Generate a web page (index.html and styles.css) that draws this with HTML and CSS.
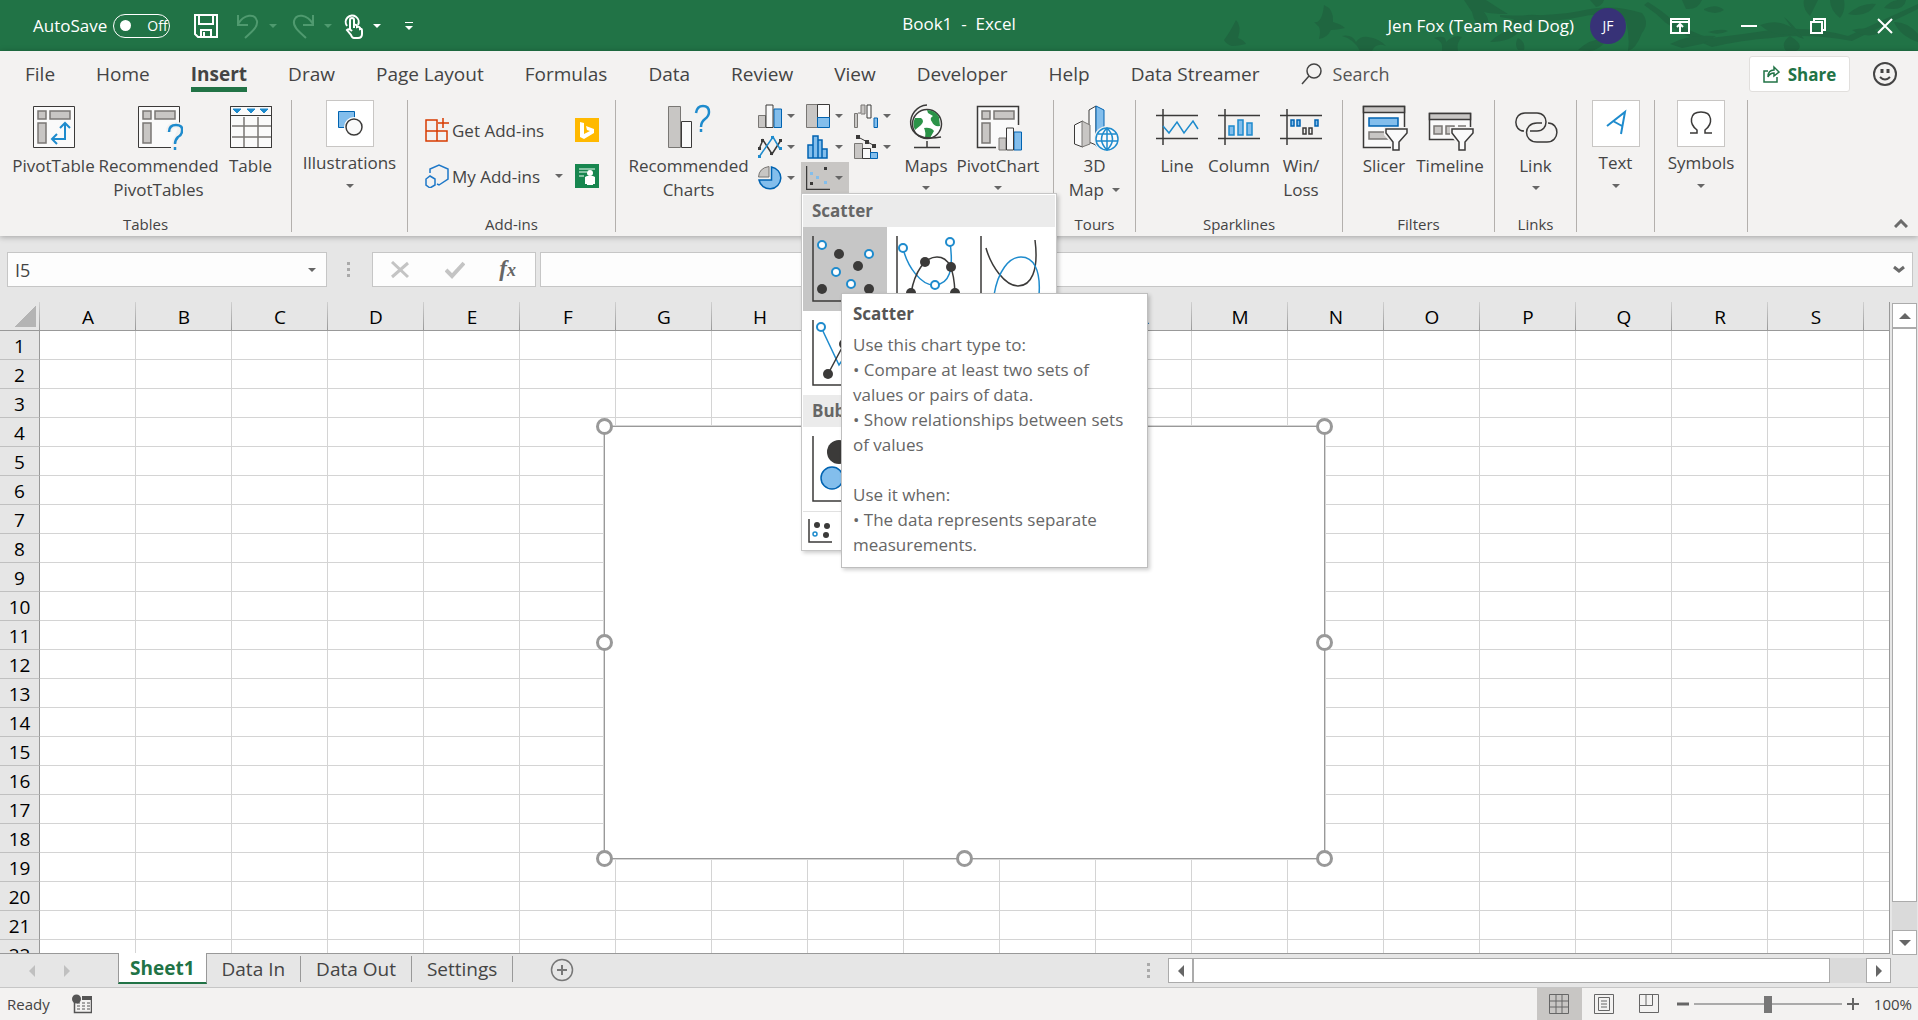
FILE: index.html
```html
<!DOCTYPE html>
<html lang="en">
<head>
  <meta charset="UTF-8" />
  <meta name="viewport" content="width=device-width, initial-scale=1.0" />
  <title>Book1 - Excel</title>
  <link rel="stylesheet" href="styles.css">
</head>
<body>
  <header class="titlebar">
    <svg class="leaves" width="718" height="51" viewBox="0 0 718 51" fill="#1f6640">
      <path d="M24 40q6-8 12-20q6 6 2 18q6 2 8 6q-8 2-14 2q-6-2-8-6z" />
      <path d="M114 22q8 2 10-17q10 4 9 17q8 2 12 6q-8 2-14 2q-4 8-12 9q2-8 0-12z" />
      <path d="M142 36q10-2 14 6q4-6 12-5q12 2 18 9q-10-4-14 5h-12q-6-12-18-15z" />
      <path d="M234 38q12-4 12 4q8-8 16-5q-6 6-4 14h-16q2-10-8-13z" />
      <path d="M264 0h22q12 8 22 14q-16 0-24-2q8 10 2 20q-12-8-14-20zM290 42q14-14 30-12q-8 12-30 12zM318 38q8 4 6 12h-6q-4-6 0-12zM310 22q14-10 32-6q-12 10-32 6z" />
      <path d="M300 15q50 2 80-4q32-8 62 2q8 10 0 20q-6 16-14 18q2-14-2-30q-22-10-46-4q-40 8-80 0z" />
      <path d="M378 50q12-12 28-11q-4 10-16 12zM390 0h14q-2 6-8 7z" />
      <path d="M448 2q16 10 24 18q18 12 38 18q36-4 60-8q40-4 78 6l70-32v5l-66 32q-44-8-80-3q-30 2-60 9q-26-10-46-24q-10-10-22-18z" />
      <path d="M482 0h20q-4 10-16 9zM504 9q12-6 20 1q-8 6-20 0zM470 44q18-10 46-8l-14 8l-20 4zM508 32q14-4 20-1q-10 5-20 1z" />
      <path d="M560 25q22-8 38 8q-22 6-38-8zM584 17q8 6 20 22l-6-2zM590 36q16 10 6 15h-10q-6-8 4-15zM604 0h14l-8 16q-8-8-6-16zM630 0h14q2 10-4 18q-10-8-10-18zM648 14q14-12 28-10q-8 14-28 10zM652 30q18-4 28 3q-14 6-28-3zM684 8q8-10 22-8q-2 12-22 8zM694 22q14 0 24 12v8q-18-6-24-20z" />
    </svg>
    <div class="quick-access">
      <span id="autosave-label">AutoSave</span>
      <button class="toggle" role="switch" aria-checked="false" aria-labelledby="autosave-label"><i></i>Off</button>
      <button class="qa-btn save" aria-label="Save">
        <svg width="24" height="24" viewBox="0 0 24 24" fill="none" stroke="#fff" stroke-width="2"><path d="M1 1h22v22H4l-3-3zM5 1v9h14V1M7 23v-7h10v7M10 18v5" /></svg>
      </button>
      <button class="qa-btn faded" aria-label="Undo">
        <svg width="24" height="26" viewBox="0 0 24 26" fill="none" stroke="#4f9a6f" stroke-width="2"><path d="M2 2v10h10M2 11C8 1 19 0 21 8c1 5-3 9-12 17" /></svg>
      </button>
      <i class="caret faded"></i>
      <button class="qa-btn redo" aria-label="Redo">
        <svg width="24" height="26" viewBox="0 0 24 26" fill="none" stroke="#4f9a6f" stroke-width="2"><path d="M22 2v10H12M22 11C16 1 5 0 3 8c-1 5 3 9 12 17" /></svg>
      </button>
      <i class="caret faded"></i>
      <button class="qa-btn touch" aria-label="Touch mode">
        <svg width="20" height="26" viewBox="0 0 20 26" fill="none" stroke="#fff" stroke-width="2"><path d="M3 13a6.500 6.500 0 1 1 11-1M6 17V7q0-2 2-2t2 2v8V12q3-1 3 2q3-1 3 2q2-1 2 2v3q0 4-4 4h-4q-2 0-3-3l-4-5q2-2 5 1" /></svg>
      </button>
      <i class="caret"></i>
      <button class="qa-btn customize" aria-label="Customize Quick Access Toolbar"><b></b><i class="caret"></i></button>
    </div>
    <h1>Book1&nbsp; -&nbsp; Excel</h1>
    <div class="account">
      <span>Jen Fox (Team Red Dog)</span>
      <button class="avatar">JF</button>
      <button class="win-btn" aria-label="Ribbon display options">
        <svg width="20" height="16" viewBox="0 0 20 16" fill="none" stroke="#fff" stroke-width="2"><path d="M1 1h18v14H1zM1 4h18M10 14V7M7 9l3-3l3 3" /></svg>
      </button>
      <button class="win-btn" aria-label="Minimize">
        <svg width="16" height="16" viewBox="0 0 16 16" stroke="#fff" stroke-width="2"><path d="M0 8h16" /></svg>
      </button>
      <button class="win-btn" aria-label="Restore">
        <svg width="16" height="16" viewBox="0 0 16 16" fill="none" stroke="#fff" stroke-width="2"><path d="M1 4h11v11H1zM4 4V1h11v11h-3" /></svg>
      </button>
      <button class="win-btn" aria-label="Close">
        <svg width="16" height="16" viewBox="0 0 16 16" stroke="#fff" stroke-width="2"><path d="M1 1l14 14M15 1L1 15" /></svg>
      </button>
    </div>
  </header>

  <div class="ribbon">
    <nav class="tabs">
      <button>File</button>
      <button>Home</button>
      <button class="active">Insert</button>
      <button>Draw</button>
      <button>Page Layout</button>
      <button>Formulas</button>
      <button>Data</button>
      <button>Review</button>
      <button>View</button>
      <button>Developer</button>
      <button>Help</button>
      <button>Data Streamer</button>
      <label class="search">
        <svg width="22" height="24" viewBox="0 0 22 24" fill="none" stroke="#444" stroke-width="1.500"><circle cx="13" cy="9" r="7" /><path d="M8 14l-7 8" /></svg>
        <input type="text" placeholder="Search" aria-label="Search">
      </label>
      <button class="share">
        <svg width="17" height="18" viewBox="0 0 17 18" fill="none" stroke="#217346" stroke-width="1.500"><path d="M5 6H1v11h13v-5M5 12q0-7 6-7V2l5 5l-5 4V8q-4 0-6 4z" /></svg>
        Share
      </button>
      <button class="smile" aria-label="Feedback">
        <svg width="24" height="24" viewBox="0 0 24 24" fill="none" stroke="#444" stroke-width="2"><circle cx="12" cy="12" r="11" /><path d="M9 7v4M15 7v4" stroke-width="3" /><path d="M7 15q5 5 10 0" /></svg>
      </button>
    </nav>

    <div class="groups">
      <section class="group tables">
        <div class="tools">
          <button class="big w92">
            <svg width="48" height="48" viewBox="0 0 48 48" fill="#fafafa" stroke="#3b3a39"><path d="M3.500 3.500h41v41h-41z" /><path d="M8 8h8v8H8zM20 8h20v8H20zM8 20h8v20H8z" fill="#c8c6c4" stroke="#797774" stroke-width="1.500" /><path d="M35 21v15H22M30 25l5-5l5 5M27 31l-5 5l5 5" fill="none" stroke="#1e8bcd" stroke-width="2" /></svg>
            <span>PivotTable</span>
          </button>
          <button class="big w118">
            <svg width="48" height="48" viewBox="0 0 48 48" fill="none" stroke="#3b3a39"><path d="M44.500 20V3.500h-41v41H36" fill="#fafafa" /><path d="M8 8h8v8H8zM20 8h20v8H20zM8 20h8v20H8z" fill="#c8c6c4" stroke="#797774" stroke-width="1.500" /><path d="M34 29q0-7 7-7t6 6q0 4-4 6q-3 3-3 7M40 44v3" stroke="#f3f2f1" stroke-width="6" /><path d="M34 29q0-7 7-7t6 6q0 4-4 6q-3 3-3 7M40 44v3" stroke="#1e8bcd" stroke-width="2.500" /></svg>
            <span>Recommended<br>PivotTables</span>
          </button>
          <button class="big w66">
            <svg width="48" height="48" viewBox="0 0 48 48" fill="#fafafa" stroke="#3b3a39"><path d="M3.500 3.500h41v41h-41z" /><path d="M5 23h39M5 34h39M17 14v30M31 14v30" stroke="#797774" stroke-width="1.500" /><path d="M3.500 3.500h41v41h-41zM4 12.500h40" fill="none" /><path d="M6 6h8l-4 4zM20 6h8l-4 4zM33 6h8l-4 4z" fill="#1e8bcd" stroke="#1e8bcd" /></svg>
            <span>Table</span>
          </button>
        </div>
        <h2>Tables</h2>
      </section>

      <section class="group illustrations">
        <button class="framed">
          <svg width="48" height="47" viewBox="0 0 48 47"><path d="M12.500 11.500h16v16h-16z" fill="#83beec" stroke="#0063b1" /><circle cx="28" cy="27" r="10" fill="#fff" /><circle cx="28" cy="27" r="8" fill="#fafafa" stroke="#3b3a39" stroke-width="1.500" /></svg>
          <span>Illustrations</span>
          <i class="caret"></i>
        </button>
      </section>

      <section class="group addins">
        <div class="addin-grid">
          <button class="small">
            <svg width="24" height="24" viewBox="0 0 24 24" fill="none" stroke="#d83b01" stroke-width="1.500"><path d="M1 2h11v11H1zM1 13h11v10H1zM12 13h10v10H12zM18 0v10M13 5h11" /></svg>
            Get Add-ins
          </button>
          <button class="small" aria-label="Bing Maps">
            <svg width="24" height="24" viewBox="0 0 24 24"><path d="M0 0h24v24H0z" fill="#ffb900" /><path d="M5 4l4 1v11l6-3l-3-1l-1-4l8 3v4l-10 6l-4-2z" fill="#fff" /></svg>
          </button>
          <button class="small">
            <svg width="24" height="24" viewBox="0 0 24 24" fill="none" stroke="#1e78c8" stroke-width="1.500"><path d="M5 9V5l9-4l9 4v10l-9 6l-2-1M5 12l5 3v6l-5 3l-4-3v-6z" /></svg>
            My Add-ins
            <i class="caret"></i>
          </button>
          <button class="small" aria-label="People Graph">
            <svg width="24" height="24" viewBox="0 0 24 24"><path d="M0 0h24v24H0z" fill="#17864f" /><path d="M4 5h16M4 8h8M4 12h5" stroke="#a9d8c0" stroke-width="1.500" /><circle cx="15" cy="9" r="3" fill="#fff" /><path d="M10 20v-7l2-1h6l2 1v7h-2v-4v5h-6v-5v4z" fill="#fff" /></svg>
          </button>
        </div>
        <h2>Add-ins</h2>
      </section>

      <section class="group charts">
        <div class="tools">
          <button class="big w129">
            <svg width="48" height="48" viewBox="0 0 48 48" fill="none" stroke="#3b3a39"><path d="M3.500 3.500h12v41h-12z" fill="#c8c6c4" stroke="#797774" /><path d="M16.500 18.500h10v26h-10z" fill="#fafafa" /><path d="M31 10q1-7 7-7t6 6q0 4-4 7q-4 3-4 8M36 26v3" stroke="#1e8bcd" stroke-width="2.500" /></svg>
            <span>Recommended<br>Charts</span>
          </button>
          <div class="chart-grid">
            <button aria-label="Column chart"><svg width="24" height="24" viewBox="0 0 24 24"><path d="M.5 11.500h7v12h-7z" fill="#c8c6c4" stroke="#797774" /><path d="M16 5h7.500v18.500H16z" fill="#83beec" stroke="#0063b1" /><path d="M8 1h7v22.500H8z" fill="#fafafa" stroke="#3b3a39" /></svg><i class="caret"></i></button>
            <button aria-label="Hierarchy chart"><svg width="24" height="24" viewBox="0 0 24 24"><path d="M.5.5h11v23H.5z" fill="#c8c6c4" stroke="#797774" /><path d="M11.500.5h12v13h-12z" fill="#fafafa" stroke="#3b3a39" /><path d="M11.500 13.500h12v10h-12z" fill="#83beec" stroke="#0063b1" /></svg><i class="caret"></i></button>
            <button aria-label="Waterfall chart"><svg width="24" height="24" viewBox="0 0 24 24"><path d="M.5 9.500h3v14h-3zM4 9h3V1h4v9H7" fill="#c8c6c4" stroke="#797774" /><path d="M13 1h4v13h-4z" fill="#fafafa" stroke="#3b3a39" /><path d="M20 14h3.500v9.500H20z" fill="#83beec" stroke="#0063b1" /></svg><i class="caret"></i></button>
            <button aria-label="Line chart"><svg width="24" height="24" viewBox="0 0 24 24" fill="none" stroke-width="1.500"><path d="M1 14L5 5l9 14l9-14" stroke="#3b3a39" /><path d="M1 22L15 2l7 12" stroke="#1e8bcd" /><path d="M0 12h3v3H0zM3 4h3v3H3zM12 17h3v3h-3zM21 4h3v3h-3z" fill="#3b3a39" /><path d="M0 20h3v3H0zM13 1h3v3h-3zM21 12h3v3h-3z" fill="#1e8bcd" /></svg><i class="caret"></i></button>
            <button aria-label="Statistic chart"><svg width="24" height="24" viewBox="0 0 24 24" fill="#83beec" stroke="#0063b1" stroke-width="1.500"><path d="M2 10h5v13H2zM7 1h5v22H7zM12 5h4v18h-4zM16 14h5v9h-5z" /></svg><i class="caret"></i></button>
            <button aria-label="Combo chart"><svg width="24" height="24" viewBox="0 0 24 24"><path d="M.5 8.500h8v15h-8z" fill="#c8c6c4" stroke="#797774" /><path d="M8.500 13.500h8v10h-8z" fill="#fafafa" stroke="#3b3a39" /><path d="M16.500 17.500h7v6h-7z" fill="#83beec" stroke="#0063b1" /><path d="M4 2l17 9" stroke="#3b3a39" /><path d="M2 0h4v4H2zM11 5h4v4h-4zM18 9h4v4h-4z" fill="#3b3a39" /></svg><i class="caret"></i></button>
            <button aria-label="Pie chart"><svg width="24" height="24" viewBox="0 0 24 24"><path d="M13.500 1a11 11 0 1 1-12.500 13h12.500z" fill="#83beec" stroke="#0063b1" stroke-width="1.500" /><path d="M11 11H.5Q1 2 11 .5z" fill="#c8c6c4" stroke="#797774" /></svg><i class="caret"></i></button>
            <div class="scatter-wrap">
              <button class="pressed" aria-label="Scatter chart" aria-expanded="true"><svg width="24" height="24" viewBox="0 0 24 24"><path d="M.5 0v23.500H24" fill="none" stroke="#3b3a39" stroke-width="1.500" /><path d="M18 1h3v3h-3zM4 16h3v3H4z" fill="#3b3a39" /><path d="M4 6h3v3H4zM10 10h3v3h-3zM18 15h3v3h-3z" fill="#83beec" /></svg><i class="caret"></i></button>
              <div class="menu">
                <h3>Scatter</h3>
                <div class="tiles">
                  <button class="hot" aria-label="Scatter">
                    <svg width="84" height="84" viewBox="0 0 84 84" fill="none" stroke-width="2"><path d="M10 9v65h64" stroke="#3b3a39" stroke-width="1.500" /><g fill="#fff" stroke="#1e8bcd"><circle cx="19" cy="18" r="4" /><circle cx="66" cy="27" r="4" /><circle cx="33" cy="45" r="4" /><circle cx="48" cy="57" r="4" /></g><g fill="#3b3a39"><circle cx="36" cy="27" r="5" /><circle cx="55" cy="39" r="5" /><circle cx="19" cy="62" r="5" /><circle cx="66" cy="62" r="5" /></g></svg>
                  </button>
                  <button aria-label="Scatter with smooth lines and markers">
                    <svg width="84" height="84" viewBox="0 0 84 84" fill="none" stroke-width="1.500"><path d="M10 9v65h64" stroke="#3b3a39" /><path d="M16 21C20 39 34 59 48 58S67 44 63 15" stroke="#1e8bcd" /><path d="M24 66C28 44 38 30 50 30S67 42 68 66" stroke="#3b3a39" /><g fill="#fff" stroke="#1e8bcd" stroke-width="2"><circle cx="16" cy="21" r="4" /><circle cx="63" cy="15" r="4" /><circle cx="48" cy="58" r="4" /></g><g fill="#3b3a39"><circle cx="38" cy="35" r="5" /><circle cx="64" cy="40" r="5" /><circle cx="24" cy="66" r="5" /><circle cx="68" cy="66" r="5" /></g></svg>
                  </button>
                  <button aria-label="Scatter with smooth lines">
                    <svg width="84" height="84" viewBox="0 0 84 84" fill="none" stroke-width="1.500"><path d="M10 9v65h64" stroke="#3b3a39" /><path d="M15 21C20 39 34 59 47 59S68 44 64 13" stroke="#3b3a39" /><path d="M23 68C27 44 38 30 50 30S70 42 68 68" stroke="#1e8bcd" /></svg>
                  </button>
                  <button aria-label="Scatter with straight lines and markers">
                    <svg width="84" height="84" viewBox="0 0 84 84" fill="none" stroke-width="1.500"><path d="M10 9v65h64" stroke="#3b3a39" /><path d="M18 16l18 38l26-38" stroke="#1e8bcd" /><path d="M25 63l16-30l26 29" stroke="#3b3a39" /><circle cx="18" cy="16" r="4" fill="#fff" stroke="#1e8bcd" stroke-width="2" /><g fill="#3b3a39"><circle cx="25" cy="63" r="5" /><circle cx="41" cy="33" r="5" /></g></svg>
                  </button>
                </div>
                <h3>Bubble</h3>
                <div class="tiles">
                  <button aria-label="Bubble">
                    <svg width="84" height="84" viewBox="0 0 84 84"><path d="M10 9v65h64" fill="none" stroke="#3b3a39" stroke-width="1.500" /><circle cx="36" cy="25" r="12" fill="#3b3a39" /><circle cx="29" cy="51" r="11" fill="#83beec" stroke="#0063b1" stroke-width="1.500" /></svg>
                  </button>
                </div>
                <button class="more" aria-label="More scatter charts">
                  <svg width="24" height="24" viewBox="0 0 24 24"><path d="M1 0v23h23" fill="none" stroke="#3b3a39" stroke-width="1.500" /><g fill="#3b3a39"><circle cx="9" cy="6" r="3" /><circle cx="19" cy="7" r="3" /><circle cx="18" cy="16" r="3" /></g><circle cx="7" cy="15" r="2" fill="#fff" stroke="#1e8bcd" stroke-width="1.500" /></svg>
                </button>
              </div>
              <div class="tooltip" role="tooltip">
                <strong>Scatter</strong>
                <p>Use this chart type to:<br>• Compare at least two sets of<br>values or pairs of data.<br>• Show relationships between sets<br>of values</p>
                <p>Use it when:<br>• The data represents separate<br>measurements.</p>
              </div>
            </div>
          </div>
          <button class="big w58">
            <svg width="48" height="48" viewBox="0 0 48 48"><circle cx="25" cy="21" r="14.500" fill="#fff" stroke="#3b3a39" stroke-width="1.500" /><path d="M25 7q8 0 12 7l1 9q-6 1-8-4q-3-4 1-6l-5-3zM22 25q7-1 10 3l-4 7h-5q1-6-1-10zM13 15l6 0q4 3 0 7l-6 5q-3-6 0-12z" fill="#2b9348" /><path d="M25 2C4 3-2 42 39 34M25 38v6M12 44.500h26" fill="none" stroke="#3b3a39" stroke-width="1.500" /></svg>
            <span>Maps</span>
            <i class="caret"></i>
          </button>
          <button class="big w86">
            <svg width="48" height="48" viewBox="0 0 48 48"><path d="M44.500 22V3.500h-41v41H22" fill="#fafafa" stroke="#3b3a39" stroke-width="1.500" /><path d="M8 8h8v8H8zM20 8h20v8H20zM8 20h8v20H8z" fill="#c8c6c4" stroke="#797774" stroke-width="1.500" /><path d="M25 35h7v12h-7z" fill="#c8c6c4" stroke="#797774" /><path d="M40 29h7.500v18H40z" fill="#83beec" stroke="#0063b1" /><path d="M32.500 25h7v22h-7z" fill="#fafafa" stroke="#3b3a39" /></svg>
            <span>PivotChart</span>
            <i class="caret"></i>
          </button>
        </div>
      </section>

      <section class="group tours">
        <div class="tools">
          <button class="big w66">
            <svg width="48" height="48" viewBox="0 0 48 48"><path d="M18 7l7-4v39l-7-3z" fill="#fafafa" stroke="#3b3a39" /><path d="M25 3l8 4v36h-8z" fill="#83beec" stroke="#0063b1" /><path d="M3.500 22l8-4v26l-8-3z" fill="#fafafa" stroke="#3b3a39" /><path d="M11 18l8 4v19l-8 3z" fill="#c8c6c4" stroke="#797774" /><circle cx="36" cy="36" r="13" fill="#f3f2f1" /><g fill="#fafafa" stroke="#1e8bcd" stroke-width="1.500"><circle cx="36" cy="36" r="11" /><path d="M36 25q-11 11 0 22q11-11 0-22zM36 25v22M27 31h18M25 38h22" fill="none" /></g></svg>
            <span>3D<br>Map <i class="caret"></i></span>
          </button>
        </div>
        <h2>Tours</h2>
      </section>

      <section class="group sparklines">
        <div class="tools">
          <button class="big w62">
            <svg width="48" height="48" viewBox="0 0 48 48" fill="none" stroke="#3b3a39" stroke-width="1.500"><path d="M3 12.500h42M3 35.500h42M10 6v36" /><path d="M10 23l6 7l8-11l7 11l9-12l5 8" stroke="#1e8bcd" /></svg>
            <span>Line</span>
          </button>
          <button class="big w62">
            <svg width="48" height="48" viewBox="0 0 48 48" fill="none" stroke="#3b3a39" stroke-width="1.500"><path d="M3 12.500h42M3 35.500h42M10 6v36" /><path d="M14 23h5v9h-5zM23 17h5v15h-5zM32 20h5v12h-5z" fill="#83beec" stroke="#1e8bcd" /></svg>
            <span>Column</span>
          </button>
          <button class="big w62">
            <svg width="48" height="48" viewBox="0 0 48 48" fill="none" stroke="#3b3a39" stroke-width="1.500"><path d="M3 12.500h42M3 35.500h42M10 6v36" /><path d="M14 17h3v6h-3zM20 17h3v6h-3zM38 17h3v6h-3z" stroke="#0063b1" fill="#83beec" /><path d="M26 25h3v6h-3zM32 25h3v6h-3z" /></svg>
            <span>Win/<br>Loss</span>
          </button>
        </div>
        <h2>Sparklines</h2>
      </section>

      <section class="group filters">
        <div class="tools">
          <button class="big w66">
            <svg width="48" height="48" viewBox="0 0 48 48" fill="#fafafa" stroke="#3b3a39" stroke-width="1.500"><path d="M3.500 3.500h41v41h-41z" /><path d="M3.500 3.500h41v6h-41z" fill="#c8c6c4" /><path d="M9 15h29v8H9z" fill="#83beec" stroke="#0063b1" /><path d="M9 29h24v7H9z" fill="#c8c6c4" stroke="#797774" /><path d="M24 24h24v23H31v-7l-7-8z" fill="#f3f2f1" stroke="none" /><path d="M26 26h21v4l-8 9v8h-6v-8l-7-9z" /></svg>
            <span>Slicer</span>
          </button>
          <button class="big w66">
            <svg width="48" height="48" viewBox="0 0 48 48" fill="#fafafa" stroke="#3b3a39" stroke-width="1.500"><path d="M3.500 10.500h41v26h-41z" /><path d="M3.500 10.500h41v6h-41z" fill="#c8c6c4" /><path d="M8 23h8v8H8zM20 23h8v8h-8zM32 23h8" fill="#c8c6c4" stroke="#797774" /><path d="M24 24h24v23H31v-7l-7-8z" fill="#f3f2f1" stroke="none" /><path d="M26 26h21v4l-8 9v8h-6v-8l-7-9z" /></svg>
            <span>Timeline</span>
          </button>
        </div>
        <h2>Filters</h2>
      </section>

      <section class="group links">
        <div class="tools">
          <button class="big w62">
            <svg width="48" height="48" viewBox="0 0 48 48" fill="none" stroke="#3b3a39" stroke-width="1.500"><path d="M12 28C1 28 1 10 13 10h12c12 0 12 18 0 18h-7M30 20h-5C11 20 11 39 25 39h10c13 0 13-19 1-19" /></svg>
            <span>Link</span>
            <i class="caret"></i>
          </button>
        </div>
        <h2>Links</h2>
      </section>

      <section class="group text">
        <button class="framed">
          <svg width="48" height="47" viewBox="0 0 48 47" fill="none" stroke="#1e8bcd" stroke-width="2"><path d="M15 26l18-14l-4 22M21 21l9 5" /></svg>
          <span>Text</span>
          <i class="caret"></i>
        </button>
      </section>

      <section class="group symbols">
        <button class="framed">
          <svg width="48" height="47" viewBox="0 0 48 47" fill="none" stroke="#3b3a39" stroke-width="1.500"><path d="M13 33h7v-3c-8-6-8-18 4-18s12 12 4 18v3h7" /></svg>
          <span>Symbols</span>
          <i class="caret"></i>
        </button>
      </section>

      <button class="collapse" aria-label="Collapse the ribbon">
        <svg width="14" height="9" viewBox="0 0 14 9" fill="none" stroke="#6b6b6b" stroke-width="3"><path d="M1 8l6-6l6 6" /></svg>
      </button>
    </div>
  </div>

  <div class="formula-bar">
    <div class="name-box">
      <input type="text" value="I5" aria-label="Name box">
      <i class="caret"></i>
    </div>
    <div class="dots"><i></i><i></i><i></i></div>
    <div class="fx-box">
      <button aria-label="Cancel"><svg width="20" height="18" viewBox="0 0 20 18" stroke="#c4c4c4" stroke-width="3"><path d="M2 1l16 15M18 2L2 16" /></svg></button>
      <button aria-label="Enter"><svg width="20" height="18" viewBox="0 0 20 18" fill="none" stroke="#c4c4c4" stroke-width="4"><path d="M1 9l6 6L19 2" /></svg></button>
      <button class="fx" aria-label="Insert function">f<small>x</small></button>
    </div>
    <div class="formula">
      <input type="text" aria-label="Formula">
      <svg width="12" height="9" viewBox="0 0 12 9" fill="none" stroke="#6b6b6b" stroke-width="3"><path d="M1 2l5 4l5-4" /></svg>
    </div>
  </div>

  <main class="sheet">
    <div class="grid">
      <table>
        <thead><tr id="columns"><th class="corner"></th></tr></thead>
        <tbody id="rows"></tbody>
      </table>
      <div class="chart-object">
        <i class="n w"></i><i class="n c"></i><i class="n e"></i>
        <i class="m w"></i><i class="m e"></i>
        <i class="s w"></i><i class="s c"></i><i class="s e"></i>
      </div>
    </div>
    <div class="vscroll">
      <button aria-label="Scroll up"><i class="arrow up"></i></button>
      <div class="thumb"></div>
      <button aria-label="Scroll down"><i class="arrow down"></i></button>
    </div>
  </main>

  <div class="sheet-tabs">
    <div class="sheet-nav"><i class="arrow left"></i><i class="arrow right"></i></div>
    <button class="active">Sheet1</button>
    <button>Data In</button>
    <button>Data Out</button>
    <button>Settings</button>
    <button class="add" aria-label="New sheet">
      <svg width="24" height="24" viewBox="0 0 24 24" fill="none" stroke="#777"><circle cx="12" cy="12" r="10.500" stroke-width="1.500" /><path d="M12 7v10M7 12h10" stroke-width="2" /></svg>
    </button>
    <div class="dots"><i></i><i></i><i></i></div>
    <div class="hscroll">
      <button aria-label="Scroll left"><i class="arrow left"></i></button>
      <div class="thumb"></div>
      <button aria-label="Scroll right"><i class="arrow right"></i></button>
    </div>
  </div>

  <footer class="status">
    <span>Ready</span>
    <button class="macro" aria-label="Record macro">
      <svg width="20" height="20" viewBox="0 0 20 20" fill="none" stroke="#555"><path d="M2.500 9v9.500h17V3" stroke-width="1.500" /><path d="M10 2h10v4H10z" fill="#555" stroke="none" /><circle cx="4.500" cy="5" r="4.500" fill="#555" stroke="none" /><path d="M5 9h13M5 12h13M5 15h13" stroke-dasharray="3 2" /></svg>
    </button>
    <button class="view on" aria-label="Normal"><svg width="20" height="20" viewBox="0 0 20 20" fill="none" stroke="#666"><path d="M.5.5h19v19H.5zM7 .5v19M13 .5v19M.5 7h19M.5 13h19" /></svg></button>
    <button class="view" aria-label="Page layout"><svg width="20" height="20" viewBox="0 0 20 20" fill="none" stroke="#666"><path d="M.5.5h19v19H.5zM4.500 3.500h11v13h-11zM7 7h6M7 10h6M7 13h6" /></svg></button>
    <button class="view" aria-label="Page break preview"><svg width="20" height="20" viewBox="0 0 20 20" fill="none" stroke="#666"><path d="M.5.500h19v18H.5zM.5 11.500h13V.5M7 .5v11" /></svg></button>
    <div class="zoom">
      <button aria-label="Zoom out"><svg width="12" height="12" viewBox="0 0 12 12" stroke="#666" stroke-width="3"><path d="M0 6h12" /></svg></button>
      <input type="range" min="0" max="200" value="100" aria-label="Zoom">
      <button aria-label="Zoom in"><svg width="12" height="12" viewBox="0 0 12 12" stroke="#666" stroke-width="2"><path d="M0 6h12M6 0v12" /></svg></button>
      <span>100%</span>
    </div>
  </footer>

  <script>
    const grid = document.querySelector(".grid");
    const columns = document.getElementById("columns");
    const rows = document.getElementById("rows");

    // only as many cells as the window can show
    const colCount = Math.min(26, Math.ceil((grid.clientWidth - 40) / 96));
    const rowCount = Math.ceil((grid.clientHeight - 29) / 29);

    for (let c = 0; c < colCount; c++) {
      const th = document.createElement("th");
      const letter = String.fromCharCode(65 + c);
      // a clipped last column has no room for its letter
      if (40 + c * 96 + 60 < grid.clientWidth) th.innerText = letter;
      columns.appendChild(th);
    }

    for (let r = 1; r <= rowCount; r++) {
      const tr = document.createElement("tr");
      tr.innerHTML = "<th>" + r + "</th>" + "<td></td>".repeat(colCount);
      rows.appendChild(tr);
    }
  </script>
</body>
</html>
```
FILE: styles.css
```css
* {
  box-sizing: border-box;
}

body {
  margin: 0;
  height: 100vh;
  display: flex;
  flex-direction: column;
  overflow: hidden;
  background: #e6e6e6;
  color: #444;
  font-family: "Open Sans", "Noto Sans", sans-serif;
  font-size: 17px;
}

button, input {
  font: inherit;
  color: inherit;
  background: none;
  border: none;
  padding: 0;
  margin: 0;
  outline: none;
}

h1, h2, h3, p {
  margin: 0;
  font-weight: normal;
}

svg {
  display: block;
  flex: none;
}

.caret {
  display: inline-block;
  flex: none;
  width: 0;
  height: 0;
  border: 4px solid transparent;
  border-top-color: #666;
  border-bottom: none;
}

.dots {
  display: flex;
  flex-direction: column;
  gap: 3px;
}

.dots i {
  width: 3px;
  height: 3px;
  background: #aaa;
}

.arrow {
  width: 0;
  height: 0;
  border: 6px solid transparent;
}

.arrow.up { border-bottom-color: #666; border-top: none; }
.arrow.down { border-top-color: #666; border-bottom: none; }
.arrow.left { border-right-color: #666; border-left: none; }
.arrow.right { border-left-color: #666; border-right: none; }

/* title bar */
.titlebar {
  position: relative;
  flex: none;
  height: 51px;
  display: grid;
  grid-template-columns: 1fr auto 1fr;
  align-items: center;
  background: #217346;
  color: #fff;
}

.leaves {
  position: absolute;
  right: 0;
  top: 0;
}

.titlebar h1 {
  font-size: 17px;
  line-height: 24px;
  padding-bottom: 3px;
}

.quick-access {
  display: flex;
  align-items: center;
  padding-left: 33px;
}

.toggle {
  display: flex;
  align-items: center;
  gap: 16px;
  width: 57px;
  height: 24px;
  margin-left: 6px;
  padding-left: 6px;
  border: 1px solid #fff;
  border-radius: 12px;
  font-size: 14px;
  line-height: 20px;
}

.toggle i {
  width: 11px;
  height: 11px;
  border-radius: 50%;
  background: #fff;
}

.quick-access .caret {
  margin-left: 9px;
  border-top-color: #fff;
}

.quick-access .caret.faded {
  border-top-color: #4f9a6f;
}

.qa-btn {
  margin-left: 14px;
}

.save {
  margin: 0 4px 0 24px;
}

.touch {
  margin-left: 12px;
}

.customize {
  display: flex;
  flex-direction: column;
  gap: 3px;
  margin-left: 24px;
}

.customize b {
  width: 8px;
  height: 1px;
  background: #fff;
}

.quick-access .customize .caret {
  margin: 0;
}

.account {
  position: relative;
  display: flex;
  align-items: center;
  justify-content: flex-end;
}

.avatar {
  width: 36px;
  height: 36px;
  margin: 0 19px 0 16px;
  border-radius: 50%;
  background: #373277;
  font-size: 14px;
}

.win-btn {
  display: flex;
  justify-content: center;
  width: 69px;
}

.win-btn:last-child {
  width: 66px;
}

/* ribbon */
.ribbon {
  position: relative;
  z-index: 2;
  flex: none;
  background: #f3f2f1;
  padding-bottom: 4px;
  box-shadow: 0 1px 6px rgba(0, 0, 0, 0.3);
}

.tabs {
  display: flex;
  align-items: center;
  gap: 41px;
  height: 49px;
  padding: 0 21px 3px 25px;
  font-size: 19px;
  white-space: nowrap;
}

.tabs .active {
  position: relative;
  font-weight: bold;
}

.tabs .active::after {
  content: "";
  position: absolute;
  left: 0;
  right: 0;
  bottom: -5px;
  height: 5px;
  background: #217346;
}

.search {
  display: flex;
  align-items: center;
  gap: 10px;
  flex: 1;
  min-width: 0;
  font-size: 18px;
}

.search input {
  width: 100px;
}

.search input::placeholder {
  color: #555;
  opacity: 1;
}

.share {
  display: flex;
  align-items: center;
  justify-content: center;
  gap: 8px;
  width: 101px;
  height: 36px;
  margin-right: -18px;
  background: #fff;
  border: 1px solid #e1dfdd;
  border-radius: 3px;
  color: #217346;
  font-size: 17px;
  font-weight: bold;
}

.groups {
  display: flex;
  height: 132px;
}

.group {
  display: flex;
  flex-direction: column;
  flex: none;
  border-right: 1px solid #b3b0ad;
}

.group h2 {
  font-size: 15px;
  line-height: 16px;
  text-align: center;
}

.tools {
  display: flex;
  flex: 1;
  align-items: flex-start;
  justify-content: center;
}

.charts .tools {
  justify-content: flex-start;
  padding-left: 8px;
}

.filters .tools {
  justify-content: flex-start;
  padding-left: 8px;
}

.tables { width: 292px; }
.illustrations { width: 116px; }
.addins { width: 208px; }
.charts { width: 438px; }
.tours { width: 82px; }
.sparklines { width: 207px; }
.filters { width: 152px; }
.links { width: 82px; }
.text { width: 78px; }
.symbols { width: 93px; }

.big {
  display: flex;
  flex-direction: column;
  align-items: center;
  padding-top: 3px;
  line-height: 24px;
  white-space: nowrap;
}

.big span {
  margin-top: 3px;
}

.big > .caret {
  margin-top: 8px;
}

.big span .caret {
  margin: 0 0 4px 4px;
}

.w58 { width: 58px; }
.w62 { width: 62px; }
.w66 { width: 66px; }
.w86 { width: 86px; }
.w92 { width: 92px; }
.w118 { width: 118px; }
.w129 { width: 129px; }

.framed {
  display: flex;
  flex-direction: column;
  align-items: center;
  line-height: 24px;
}

.framed svg {
  background: #fff;
  outline: 1px solid #c8c6c4;
  outline-offset: -1px;
}

.framed span {
  margin-top: 4px;
}

.framed .caret {
  margin-top: 9px;
}

.addin-grid {
  flex: 1;
  display: grid;
  grid-template-columns: 150px 24px;
  grid-template-rows: 46px 46px;
  padding: 7px 0 0 17px;
}

.small {
  display: flex;
  align-items: center;
  gap: 3px;
  white-space: nowrap;
}

.small .caret {
  margin-left: 12px;
}

.chart-grid {
  display: grid;
  grid-template-columns: 48px 48px 48px;
  grid-auto-rows: 31px;
}

.chart-grid > button,
.pressed {
  display: flex;
  align-items: center;
  gap: 5px;
  width: 48px;
  height: 31px;
  padding-left: 5px;
}

.pressed {
  background: #c8c6c4;
}

.scatter-wrap {
  position: relative;
}

/* chart gallery */
.menu {
  position: absolute;
  left: 0;
  top: 31px;
  width: 256px;
  padding: 1px;
  background: #fff;
  border: 1px solid #c6c6c6;
  box-shadow: 2px 2px 4px rgba(0, 0, 0, 0.2);
}

.menu h3 {
  padding-left: 9px;
  background: #ebebeb;
  color: #666;
  font-size: 17px;
  font-weight: bold;
  line-height: 32px;
}

.tiles {
  display: flex;
  flex-wrap: wrap;
}

.tiles .hot {
  background: #c6c6c6;
}

.more {
  display: block;
  width: 100%;
  height: 38px;
  padding-left: 5px;
  border-top: 1px solid #e1e1e1;
}

.tooltip {
  position: absolute;
  left: 40px;
  top: 131px;
  width: 307px;
  padding: 7px 11px 10px;
  background: #fff;
  border: 1px solid #bebebe;
  box-shadow: 2px 2px 4px rgba(0, 0, 0, 0.2);
  color: #666;
  line-height: 25px;
  white-space: nowrap;
}

.tooltip strong {
  display: block;
  margin-bottom: 6px;
  color: #555;
}

.tooltip p + p {
  margin-top: 25px;
}

.collapse {
  align-self: flex-end;
  margin: 0 10px 4px auto;
}

/* formula bar */
.formula-bar {
  flex: none;
  display: flex;
  align-items: center;
  padding: 16px 5px 15px 7px;
  font-size: 18px;
}

.name-box, .fx-box, .formula {
  display: flex;
  align-items: center;
  height: 35px;
  background: #fdfdfd;
  border: 1px solid #c6c6c6;
}

.name-box {
  width: 320px;
  padding: 0 10px 0 7px;
}

.name-box input, .formula input {
  flex: 1;
  min-width: 0;
}

.formula-bar .dots {
  margin: 0 22px 0 20px;
}

.fx-box {
  justify-content: space-between;
  width: 164px;
  padding: 0 19px 0 17px;
}

.fx {
  font-family: "Liberation Serif", serif;
  font-size: 23px;
  font-style: italic;
  font-weight: bold;
  line-height: 24px;
  color: #666;
}

.fx small {
  font-size: 18px;
}

.formula {
  flex: 1;
  margin-left: 4px;
  padding: 0 7px;
}

/* sheet */
.sheet {
  flex: 1;
  min-height: 0;
  display: flex;
}

.grid {
  position: relative;
  flex: 1;
  overflow: hidden;
  border-bottom: 1px solid #999;
  border-right: 1px solid #999;
}

.grid table {
  table-layout: fixed;
  width: 0;
  border-collapse: separate;
  border-spacing: 0;
  font-size: 19px;
  color: #000;
}

.grid th {
  height: 29px;
  padding: 2px 0 0;
  font-weight: normal;
  line-height: 26px;
}

.grid thead th {
  width: 96px;
  background: linear-gradient(#d0d0d0, #999) right / 1px 100% no-repeat #e6e6e6;
  border-bottom: 1px solid #999;
}

.grid thead .corner {
  width: 40px;
  background: linear-gradient(135deg, transparent 50%, #b4b4b4 50%) 15px 4px / 21px 21px no-repeat, linear-gradient(#d0d0d0, #999) right / 1px 100% no-repeat #e6e6e6;
}

.grid tbody th {
  background: #e6e6e6;
  border-right: 1px solid #999;
  border-bottom: 1px solid #c0c0c0;
}

.grid td {
  padding: 0;
  background: #fff;
  border-right: 1px solid #d4d4d4;
  border-bottom: 1px solid #d4d4d4;
}

.chart-object {
  position: absolute;
  left: 604px;
  top: 124px;
  width: 721px;
  height: 433px;
  background: #fff;
  border: 1px solid #999;
  box-shadow: 0 0 0 1px #d6d6d6;
}

.chart-object i {
  position: absolute;
  width: 17px;
  height: 17px;
  margin: -9px;
  border: 3px solid #999;
  border-radius: 50%;
  background: #fff;
}

.chart-object .n { top: 0; }
.chart-object .m { top: 50%; }
.chart-object .s { top: 100%; margin-top: -8px; }
.chart-object .w { left: 0; }
.chart-object .c { left: 50%; }
.chart-object .e { left: 100%; margin-left: -8px; }

.vscroll {
  display: flex;
  flex-direction: column;
  width: 25px;
  margin: 1px 1px -1px 2px;
  background: #dadada;
}

.vscroll button, .hscroll button {
  flex: none;
  display: flex;
  align-items: center;
  justify-content: center;
  width: 25px;
  height: 25px;
  background: #fff;
  border: 1px solid #ababab;
}

.thumb {
  background: #fff;
  border: 1px solid #ababab;
}

.vscroll .thumb {
  flex: 1;
  margin-bottom: 28px;
}

/* sheet tabs */
.sheet-tabs {
  flex: none;
  display: flex;
  align-items: center;
  height: 34px;
  border-bottom: 1px solid #c6c6c6;
  font-size: 19px;
}

.sheet-nav {
  display: flex;
  gap: 29px;
  width: 118px;
  padding-left: 29px;
}

.sheet-nav .arrow.left { border-right-color: #c0c0c0; }
.sheet-nav .arrow.right { border-left-color: #c0c0c0; }

.sheet-tabs > button {
  align-self: flex-start;
  height: 26px;
  margin-top: 2px;
  padding: 0 15px;
  line-height: 24px;
  border-right: 1px solid #999;
}

.sheet-tabs > .active {
  position: relative;
  height: 31px;
  margin-top: -1px;
  padding: 0 11px;
  background: #fff;
  border-left: 1px solid #999;
  border-bottom: 2px solid #217346;
  color: #217346;
  font-weight: bold;
}

.sheet-tabs > .add {
  margin: 3px auto 0 37px;
  padding: 0;
  border: none;
}

.sheet-tabs .dots {
  margin-right: 18px;
}

.hscroll {
  display: flex;
  width: 723px;
  max-width: 40%;
  margin-right: 27px;
  background: #dadada;
}

.hscroll .thumb {
  flex: 1;
  margin-right: 36px;
}

/* status bar */
.status {
  flex: none;
  display: flex;
  align-items: center;
  height: 32px;
  padding: 0 6px 0 7px;
  background: #f3f2f1;
  font-size: 15px;
}

.macro {
  margin: 0 auto 0 22px;
}

.view {
  display: flex;
  align-items: center;
  justify-content: center;
  width: 45px;
  height: 32px;
}

.view.on {
  background: #c8c6c4;
}

.zoom {
  display: flex;
  align-items: center;
  gap: 5px;
  padding-left: 5px;
}

.zoom span {
  padding-left: 10px;
}

.zoom input {
  appearance: none;
  width: 148px;
  height: 18px;
  background: linear-gradient(#aaa, #aaa) center / 100% 2px no-repeat;
}

.zoom input::-webkit-slider-thumb {
  appearance: none;
  width: 8px;
  height: 17px;
  background: #777;
}
```
